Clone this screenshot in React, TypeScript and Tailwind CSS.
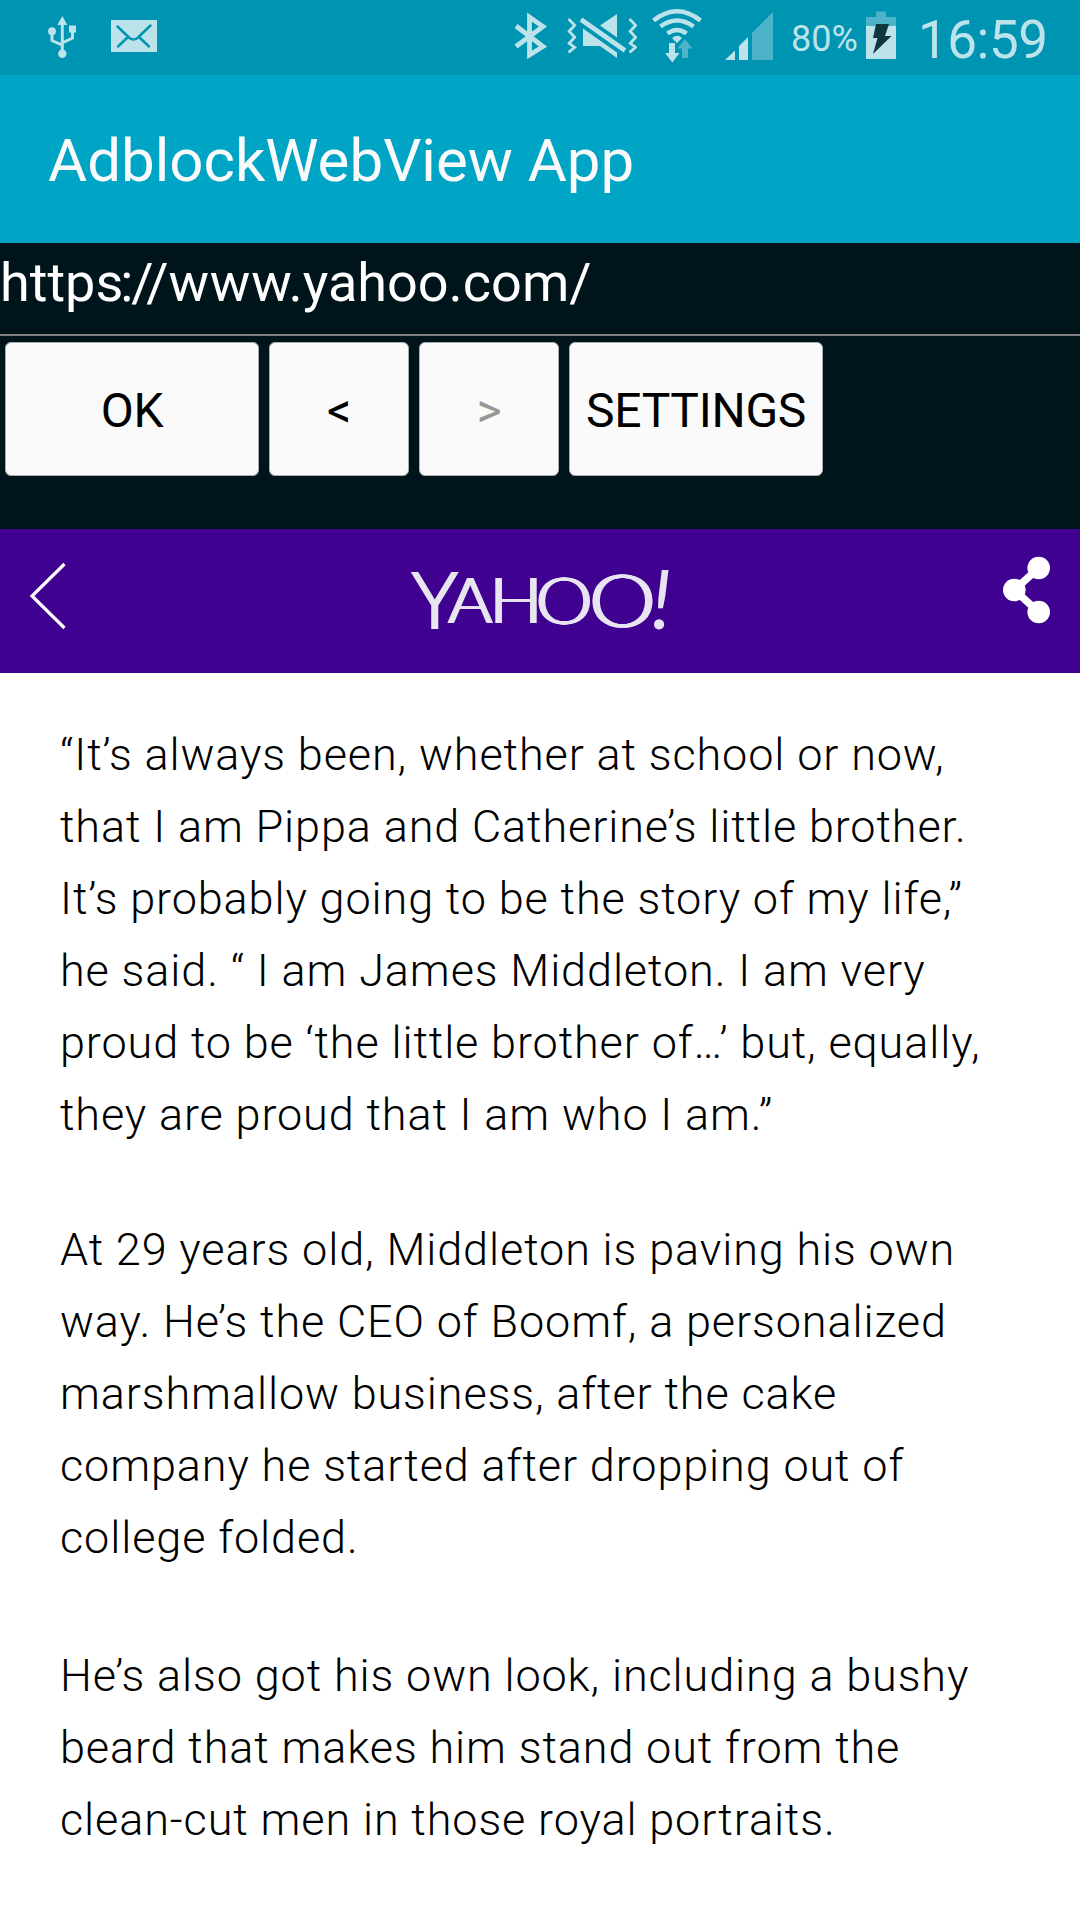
import React from "react";

const PARAGRAPHS: string[][] = [
  [
    "“It’s always been, whether at school or now,",
    "that I am Pippa and Catherine’s little brother.",
    "It’s probably going to be the story of my life,”",
    "he said. “ I am James Middleton. I am very",
    "proud to be ‘the little brother of…’ but, equally,",
    "they are proud that I am who I am.”",
  ],
  [
    "At 29 years old, Middleton is paving his own",
    "way. He’s the CEO of Boomf, a personalized",
    "marshmallow business, after the cake",
    "company he started after dropping out of",
    "college folded.",
  ],
  [
    "He’s also got his own look, including a bushy",
    "beard that makes him stand out from the",
    "clean-cut men in those royal portraits.",
  ],
];

function StatusBar() {
  return (
    <header className="flex h-[75px] items-start bg-[#0094b3] text-[#bde3ea]">
      <svg className="ml-[46px] h-[75px] w-8 shrink-0" viewBox="46 0 32 75" fill="currentColor">
        <path d="M62.300 16l5 9h-10z" />
        <path d="M62.300 24v28M52 32v8.500l10 4.500M72.500 31v7l-10.500 5" fill="none" stroke="currentColor" strokeWidth="3" />
        <circle cx="52" cy="31.200" r="3.900" />
        <path d="M69 25.500h7v7h-7z" />
        <circle cx="62.300" cy="53.700" r="4.200" />
      </svg>
      <svg className="ml-[33px] h-[75px] w-[46px] shrink-0" viewBox="111 0 46 75">
        <path d="M111 20h46v32h-46z" fill="currentColor" />
        <path d="M117.500 26.500l12 11.500q4 3 8 0l13-12.500M128 37l-10 9.500M139 37l10 9.500" fill="none" stroke="#0094b3" strokeWidth="2.500" strokeLinecap="round" />
      </svg>
      <svg className="ml-[357px] h-[75px] w-[33px] shrink-0" viewBox="514 0 33 75" fill="none" stroke="currentColor" strokeWidth="4.800">
        <path d="M516 26l27 20.500L529.500 55V17L543 26.500 516 46.500" />
      </svg>
      <svg className="ml-5 h-[75px] w-[70px] shrink-0" viewBox="567 0 70 75" fill="currentColor">
        <path d="M617 14v23.500L600 25.500zM583 28.500v17.500h17l17 12v-5.500z" />
        <path d="M581 19.500l44 31" stroke="currentColor" strokeWidth="4.600" />
        <path d="M568.500 19l6.200 6.300-5.500 6 5.500 6-5.500 6 5.500 4-6.200 5M629.500 19l6.200 6.300-5.500 6 5.500 6-5.500 6 5.500 4-6.200 5" fill="none" stroke="currentColor" strokeWidth="2.800" />
      </svg>
      <svg className="ml-[15px] h-[75px] w-[50px] shrink-0" viewBox="652 0 50 75">
        <g fill="none" stroke="currentColor" strokeWidth="4.600">
          <path d="M653.500 20.500q23.500-18.500 47 0" />
          <path d="M660.500 26.500q16.500-12 33 0" />
          <path d="M667.500 33.500q9.500-7 19 0" />
        </g>
        <path d="M672 38q5.500-4.500 10 0l-5 5z" fill="currentColor" />
        <path d="M669 43h6v10h4.500l-7.200 9.500-7.200-9.500h3.900z" fill="currentColor" />
        <path d="M685 39l7.500 9.500H688V58h-6V48.500h-4.500z" fill="#4db3c8" />
      </svg>
      <svg className="ml-[23px] h-[75px] w-12 shrink-0" viewBox="725 0 48 75">
        <path d="M735 50.500V60h-10zM748 37v23h-9V46z" fill="currentColor" />
        <path d="M773 12v48h-21V33z" fill="#4db3c8" />
      </svg>
      <span className="ml-[18px] w-[68px] whitespace-nowrap pt-[17px] text-[36px] leading-[44px]">80%</span>
      <svg className="ml-[7px] h-[75px] w-[30px] shrink-0" viewBox="866 0 30 75">
        <path d="M876 11.500h10V17h10v9h-30v-9h10z" fill="#4db3c8" />
        <path d="M866 26h30v33h-30z" fill="currentColor" />
        <path d="M876 24h13l-4 12h6.500L873 54l4.500-16H873z" fill="#10363f" />
      </svg>
      <time className="ml-[22px] whitespace-nowrap pt-2 text-[53px] leading-[64px] tracking-[-0.5px]">16:59</time>
    </header>
  );
}

function AddressPanel() {
  const button =
    "flex h-[134px] items-center justify-center rounded-[6px] border border-[#a9adad] bg-[#fafafa] pt-[3px] text-[48px] leading-none tracking-[-0.3px] text-black";
  return (
    <section className="h-[286px] bg-[#00151b]">
      <div className="flex h-[93px] border-b-2 border-[#808080]">
        <span className="whitespace-nowrap pt-2 text-[54px] leading-[64px] text-white">
          http<span className="tracking-[-3px]">s</span>
          <span className="tracking-[-2px]">:</span>
          <span className="tracking-[-7.5px]">/</span>/
          <span className="tracking-[0.8px]">ww</span>w.yahoo.com/
        </span>
      </div>
      <div className="flex gap-[10px] pl-[5px] pt-[6px]">
        <button className={`${button} w-[254px]`}>OK</button>
        <button className={`${button} w-[140px]`}>&lt;</button>
        <button className={`${button} w-[140px]`}><span className="text-[#979797]">&gt;</span></button>
        <button className={`${button} w-[254px]`}>SETTINGS</button>
      </div>
    </section>
  );
}

function YahooBar() {
  return (
    <nav className="flex h-36 items-start bg-[#400090]">
      <svg className="ml-7 mt-8 h-[70px] w-10" viewBox="28 561 40 70" fill="none" stroke="#fff" strokeWidth="3.200">
        <path d="M64.500 564L32 596l32.500 32" />
      </svg>
      <svg className="ml-[336px] mt-8 h-[76px] w-[276px] overflow-visible" viewBox="404 561 276 76" fill="#e8e5f1" fontFamily="Lato" fontWeight="300">
        {/* Offset shadows widen the vertical strokes while the horizontals stay thin. */}
        <g className="[filter:drop-shadow(1.5px_0_0_#e8e5f1)_drop-shadow(2px_0_0_#e8e5f1)]">
          <text x="410" y="629" fontSize="81" textLength="46.500" lengthAdjust="spacingAndGlyphs">Y</text>
          <text x="446.500" y="623" fontSize="64" textLength="44.500" lengthAdjust="spacingAndGlyphs">A</text>
          <text x="488" y="623" fontSize="64" textLength="53" lengthAdjust="spacingAndGlyphs">H</text>
          <text x="534.200" y="623.500" fontSize="65" textLength="57" lengthAdjust="spacingAndGlyphs">O</text>
          <text x="587.500" y="626.500" fontSize="73" textLength="67" lengthAdjust="spacingAndGlyphs">O</text>
        </g>
        <text x="651" y="629" fontSize="81" fontWeight="400" fontStyle="italic">!</text>
      </svg>
      <svg className="ml-[322px] mt-[26px] h-[70px] w-[50px]" viewBox="1002 555 50 70" fill="#fff">
        <path d="M1038.500 568l-24 22 24 22" fill="none" stroke="#fff" strokeWidth="7.500" />
        <circle cx="1038.700" cy="568" r="11.300" />
        <circle cx="1014.300" cy="590" r="11.300" />
        <circle cx="1038.700" cy="612" r="11.300" />
      </svg>
    </nav>
  );
}

export default function App() {
  return (
    <div className="flex h-[1920px] w-[1080px] flex-col overflow-hidden bg-white font-['Roboto',sans-serif]">
      <StatusBar />
      <div className="flex h-[168px] items-center bg-[#00a5c6] pl-12">
        <h1 className="whitespace-nowrap pt-[4px] text-[60px] leading-[72px] text-[#fafafa]">AdblockWebView App</h1>
      </div>
      <AddressPanel />
      <YahooBar />
      <main className="flex flex-col pl-[60px] pt-[46px] text-[45px] font-light leading-[72px] tracking-[0.88px] text-black">
        {PARAGRAPHS.map((lines, i) => (
          <p key={i} className="pb-[63px] last:pt-[3px]">
            {lines.map((line) => (
              <span key={line} className="block whitespace-nowrap">{line}</span>
            ))}
          </p>
        ))}
      </main>
    </div>
  );
}
